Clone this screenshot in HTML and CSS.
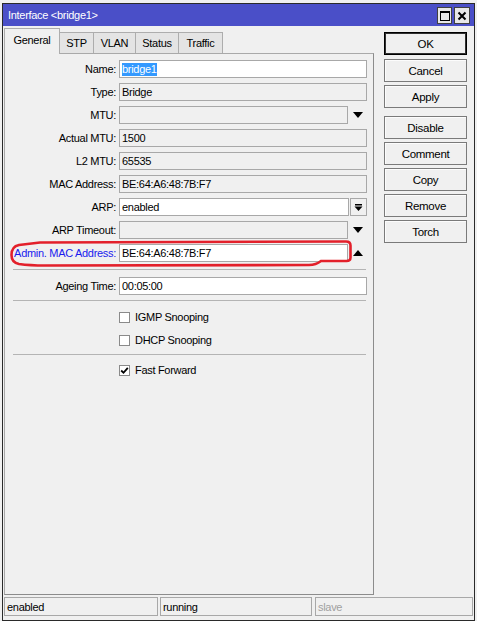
FILE: index.html
```html
<!DOCTYPE html>
<html>
<head>
<meta charset="utf-8">
<link rel="stylesheet" href="styles.css">
</head>
<body>
<div class="window">
  <div class="titlebar">
    <span class="title">Interface &lt;bridge1&gt;</span>
    <div class="tbtns">
      <span class="tbtn"><svg width="12" height="12" viewBox="0 0 12 12"><rect x="1.5" y="1.5" width="9" height="9" fill="none" stroke="#000" stroke-width="1"/><rect x="1" y="1" width="10" height="2" fill="#000"/></svg></span>
      <span class="tbtn close"><svg width="12" height="12" viewBox="0 0 12 12"><path d="M2.5 2.5 L9.5 9.5 M9.5 2.5 L2.5 9.5" stroke="#000" stroke-width="2"/></svg></span>
    </div>
  </div>
  <div class="main">
    <div class="left">
      <div class="tabs">
        <div class="tab sel w-general">General</div>
        <div class="tab w-stp">STP</div>
        <div class="tab w-vlan">VLAN</div>
        <div class="tab w-status">Status</div>
        <div class="tab w-traffic">Traffic</div>
      </div>
      <div class="panel">
        <div class="row"><label class="lbl">Name:</label><div class="field"><div class="inp edit"><span class="selected">bridge1</span></div></div></div>
        <div class="row"><label class="lbl">Type:</label><div class="field"><div class="inp">Bridge</div></div></div>
        <div class="row"><label class="lbl">MTU:</label><div class="field"><div class="inp short"></div><span class="arrow"><svg width="10" height="6" viewBox="0 0 10 6"><path d="M0 0 H10 L5 6 Z" fill="#000"/></svg></span></div></div>
        <div class="row"><label class="lbl">Actual MTU:</label><div class="field"><div class="inp">1500</div></div></div>
        <div class="row"><label class="lbl">L2 MTU:</label><div class="field"><div class="inp">65535</div></div></div>
        <div class="row"><label class="lbl">MAC Address:</label><div class="field"><div class="inp">BE:64:A6:48:7B:F7</div></div></div>
        <div class="row"><label class="lbl">ARP:</label><div class="field"><div class="inp edit short">enabled</div><span class="dropbtn"><svg width="9" height="9" viewBox="0 0 9 9"><rect x="1" y="1" width="7" height="1.5" fill="#000"/><path d="M0.5 3.5 H8.5 L4.5 8 Z" fill="#000"/></svg></span></div></div>
        <div class="row"><label class="lbl">ARP Timeout:</label><div class="field"><div class="inp short"></div><span class="arrow"><svg width="10" height="6" viewBox="0 0 10 6"><path d="M0 0 H10 L5 6 Z" fill="#000"/></svg></span></div></div>
        <div class="row"><label class="lbl blue">Admin. MAC Address:</label><div class="field"><div class="inp edit short">BE:64:A6:48:7B:F7</div><span class="arrow"><svg width="10" height="6" viewBox="0 0 10 6"><path d="M0 6 H10 L5 0 Z" fill="#000"/></svg></span></div></div>
        <div class="sep sep-a"></div>
        <div class="row"><label class="lbl">Ageing Time:</label><div class="field"><div class="inp edit">00:05:00</div></div></div>
        <div class="sep sep-b"></div>
        <div class="crow first"><span class="cb"></span><span>IGMP Snooping</span></div>
        <div class="crow"><span class="cb"></span><span>DHCP Snooping</span></div>
        <div class="sep sep-c"></div>
        <div class="crow ff"><span class="cb"><svg width="9" height="9" viewBox="0 0 9 9"><path d="M1.2 4.5 L3.5 6.8 L7.8 1.8" fill="none" stroke="#000" stroke-width="1.8"/></svg></span><span>Fast Forward</span></div>
      </div>
    </div>
    <div class="buttons">
      <div class="btn default">OK</div>
      <div class="btn">Cancel</div>
      <div class="btn apply">Apply</div>
      <div class="btn">Disable</div>
      <div class="btn">Comment</div>
      <div class="btn">Copy</div>
      <div class="btn">Remove</div>
      <div class="btn">Torch</div>
    </div>
  </div>
  <div class="statusbar">
    <div class="sf f1">enabled</div>
    <div class="sf f2">running</div>
    <div class="sf f3 dim">slave</div>
  </div>
  <svg class="annot" width="477" height="300" viewBox="0 0 477 300">
    <path d="M40 242.5 L346 241.5 Q350.5 241.5 350.5 245.5 L350.5 257.5 Q350.5 261 346.5 261 L321 261 Q316 265 309 265 L45 265.5 Q30 265.5 19 264 Q11.5 262.5 11.5 255 Q11.5 246.5 19 245 Z" fill="none" stroke="#e3202b" stroke-width="2.6"/>
  </svg>
</div>
</body>
</html>
```
FILE: styles.css
```css
html, body {
  margin: 0;
  padding: 0;
}
body {
  background: #f0f0f0;
  font-family: "Liberation Sans", Arial, sans-serif;
  font-size: 11px;
  letter-spacing: -0.3px;
  color: #000;
  width: 477px;
  height: 621px;
  overflow: hidden;
}
.window {
  position: relative;
  margin: 3px 0 0 2px;
  width: 471px;
  height: 616px;
  border: 1px solid #2a2a2a;
  background: #f0f0f0;
}
.titlebar {
  height: 22px;
  background: #4a4fc8;
  display: flex;
  align-items: center;
  justify-content: space-between;
  padding: 0 4px 0 5px;
}
.title {
  color: #fff;
  font-size: 11px;
}
.tbtns {
  display: flex;
  gap: 2px;
  align-self: flex-start;
  margin-top: 3px;
}
.tbtn {
  width: 13px;
  height: 15px;
  background: #e8e8e8;
  border: 1px solid #404040;
  display: flex;
  align-items: center;
  justify-content: center;
}
.tbtn.close {
  width: 14px;
}
.main {
  display: flex;
  height: 569px;
  padding-left: 1px;
}
.left {
  width: 370px;
  padding-top: 2px;
}
.tabs {
  display: flex;
  height: 25px;
  align-items: flex-end;
  position: relative;
  z-index: 1;
}
.tab {
  box-sizing: border-box;
  height: 21px;
  border: 1px solid #adadad;
  border-bottom: none;
  background: #e4e4e4;
  display: flex;
  align-items: center;
  justify-content: center;
  margin-left: -1px;
}
.tab.sel {
  height: 26px;
  margin-bottom: -1px;
  background: #f0f0f0;
  margin-left: 0;
  padding-bottom: 3px;
}
.w-general { width: 56px; }
.w-stp { width: 35px; }
.w-vlan { width: 43px; }
.w-status { width: 44px; }
.w-traffic { width: 45px; }
.panel {
  box-sizing: border-box;
  height: 542px;
  border: 1px solid #a9a9a9;
  border-right-color: #8c8c8c;
  border-bottom-color: #8c8c8c;
  padding-top: 6px;
  display: flex;
  flex-direction: column;
}
.row {
  display: flex;
  align-items: center;
  height: 18px;
  margin-bottom: 5px;
}
.lbl {
  width: 111px;
  text-align: right;
  margin-right: 3px;
  white-space: nowrap;
}
.lbl.blue {
  color: #1a1aef;
}
.field {
  display: flex;
  align-items: center;
  width: 248px;
}
.inp {
  box-sizing: border-box;
  height: 18px;
  width: 248px;
  border: 1px solid #a8a8a8;
  background: #f0f0f0;
  padding-left: 2px;
  display: flex;
  align-items: center;
  white-space: nowrap;
}
.inp.short {
  width: 230px;
}
.inp.edit {
  background: #fff;
}
.selected {
  background: #3399ff;
  color: #fff;
  line-height: 13px;
}
.arrow {
  width: 18px;
  display: flex;
  justify-content: center;
  padding-left: 1px;
}
.dropbtn {
  box-sizing: border-box;
  width: 17px;
  height: 18px;
  margin-left: 1px;
  border: 1px solid #a8a8a8;
  background: #f0f0f0;
  display: flex;
  align-items: center;
  justify-content: center;
}
.sep {
  height: 1px;
  background: #b4b4b4;
  margin-left: 8px;
  width: 353px;
}
.sep-a {
  margin-top: 2px;
  margin-bottom: 7px;
}
.sep-b {
  margin-top: 0px;
  margin-bottom: 7px;
}
.sep-c {
  margin-top: 0;
  margin-bottom: 6px;
}
.crow {
  display: flex;
  align-items: center;
  height: 18px;
  margin-bottom: 5px;
  padding-left: 114px;
}
.cb {
  box-sizing: border-box;
  width: 11px;
  height: 11px;
  border: 1px solid #8a8a8a;
  background: #fff;
  margin-right: 5px;
  display: flex;
  align-items: center;
  justify-content: center;
}
.buttons {
  width: 83px;
  margin-left: 10px;
  padding-top: 6px;
  display: flex;
  flex-direction: column;
  gap: 3px;
}
.btn {
  box-sizing: border-box;
  height: 23px;
  border: 1px solid #7a7a7a;
  box-shadow: inset 1px 1px 0 #fcfcfc;
  background: #f0f0f0;
  display: flex;
  align-items: center;
  justify-content: center;
  font-size: 11.5px;
}
.btn.default {
  border: 1px solid #000;
  box-shadow: inset 0 0 0 1px #303030;
  margin-bottom: 1px;
}
.btn.apply {
  margin-bottom: 5px;
}
.statusbar {
  display: flex;
  margin-top: 2px;
  height: 19px;
  padding-left: 1px;
}
.sf {
  box-sizing: border-box;
  height: 19px;
  border: 1px solid #a8a8a8;
  padding-left: 2px;
  display: flex;
  align-items: center;
}
.f1 { width: 154px; }
.f2 { width: 152px; margin-left: 2px; }
.f3 { width: 158px; margin-left: 3px; }
.dim { color: #a0a0a0; }
.annot {
  position: absolute;
  left: -3px;
  top: -4px;
  pointer-events: none;
}
```
